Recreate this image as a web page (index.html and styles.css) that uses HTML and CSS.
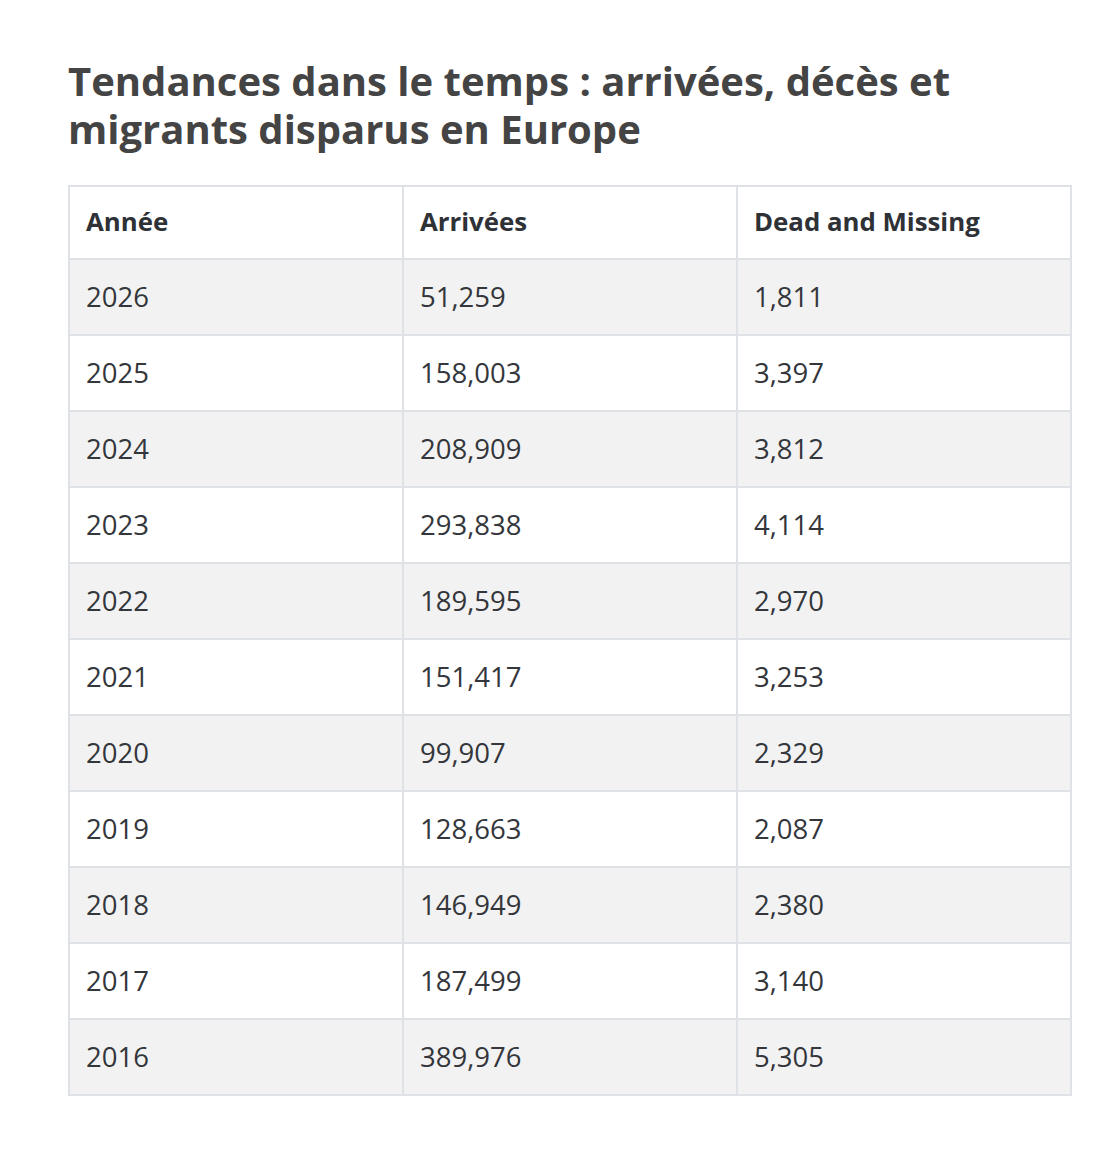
FILE: index.html
```html
<!DOCTYPE html>
<html lang="fr">
<head>
<meta charset="utf-8">
<link rel="stylesheet" href="styles.css">
</head>
<body>
<main class="page">
  <h2 class="title">Tendances dans le temps : arrivées, décès et migrants disparus en Europe</h2>
  <table class="data">
    <thead>
      <tr><th>Année</th><th>Arrivées</th><th>Dead and Missing</th></tr>
    </thead>
    <tbody>
      <tr><td>2026</td><td>51,259</td><td>1,811</td></tr>
      <tr><td>2025</td><td>158,003</td><td>3,397</td></tr>
      <tr><td>2024</td><td>208,909</td><td>3,812</td></tr>
      <tr><td>2023</td><td>293,838</td><td>4,114</td></tr>
      <tr><td>2022</td><td>189,595</td><td>2,970</td></tr>
      <tr><td>2021</td><td>151,417</td><td>3,253</td></tr>
      <tr><td>2020</td><td>99,907</td><td>2,329</td></tr>
      <tr><td>2019</td><td>128,663</td><td>2,087</td></tr>
      <tr><td>2018</td><td>146,949</td><td>2,380</td></tr>
      <tr><td>2017</td><td>187,499</td><td>3,140</td></tr>
      <tr><td>2016</td><td>389,976</td><td>5,305</td></tr>
    </tbody>
  </table>
</main>
</body>
</html>
```
FILE: styles.css
```css
html, body {
  margin: 0;
  padding: 0;
  background: #ffffff;
}
.page {
  padding: 57px 0 0 68px;
  font-family: "Open Sans", "Liberation Sans", sans-serif;
}
.title {
  margin: 0 0 32px 0;
  width: 1000px;
  font-size: 40px;
  line-height: 48px;
  font-weight: 700;
  color: #444444;
}
.data {
  border-collapse: collapse;
  width: 1004px;
  table-layout: fixed;
}
.data th, .data td {
  border: 2px solid #dee2e6;
  text-align: left;
  padding: 19px 16px 19px 16px;
  line-height: 36px;
}
.data th {
  font-size: 25.8px;
  font-weight: 700;
  color: #2e3136;
  padding: 16px 16px 19px 16px;
}
.data td {
  font-size: 27.5px;
  font-weight: 400;
  color: #33363b;
}
.data tbody tr:nth-child(odd) {
  background: #f2f2f2;
}
```
